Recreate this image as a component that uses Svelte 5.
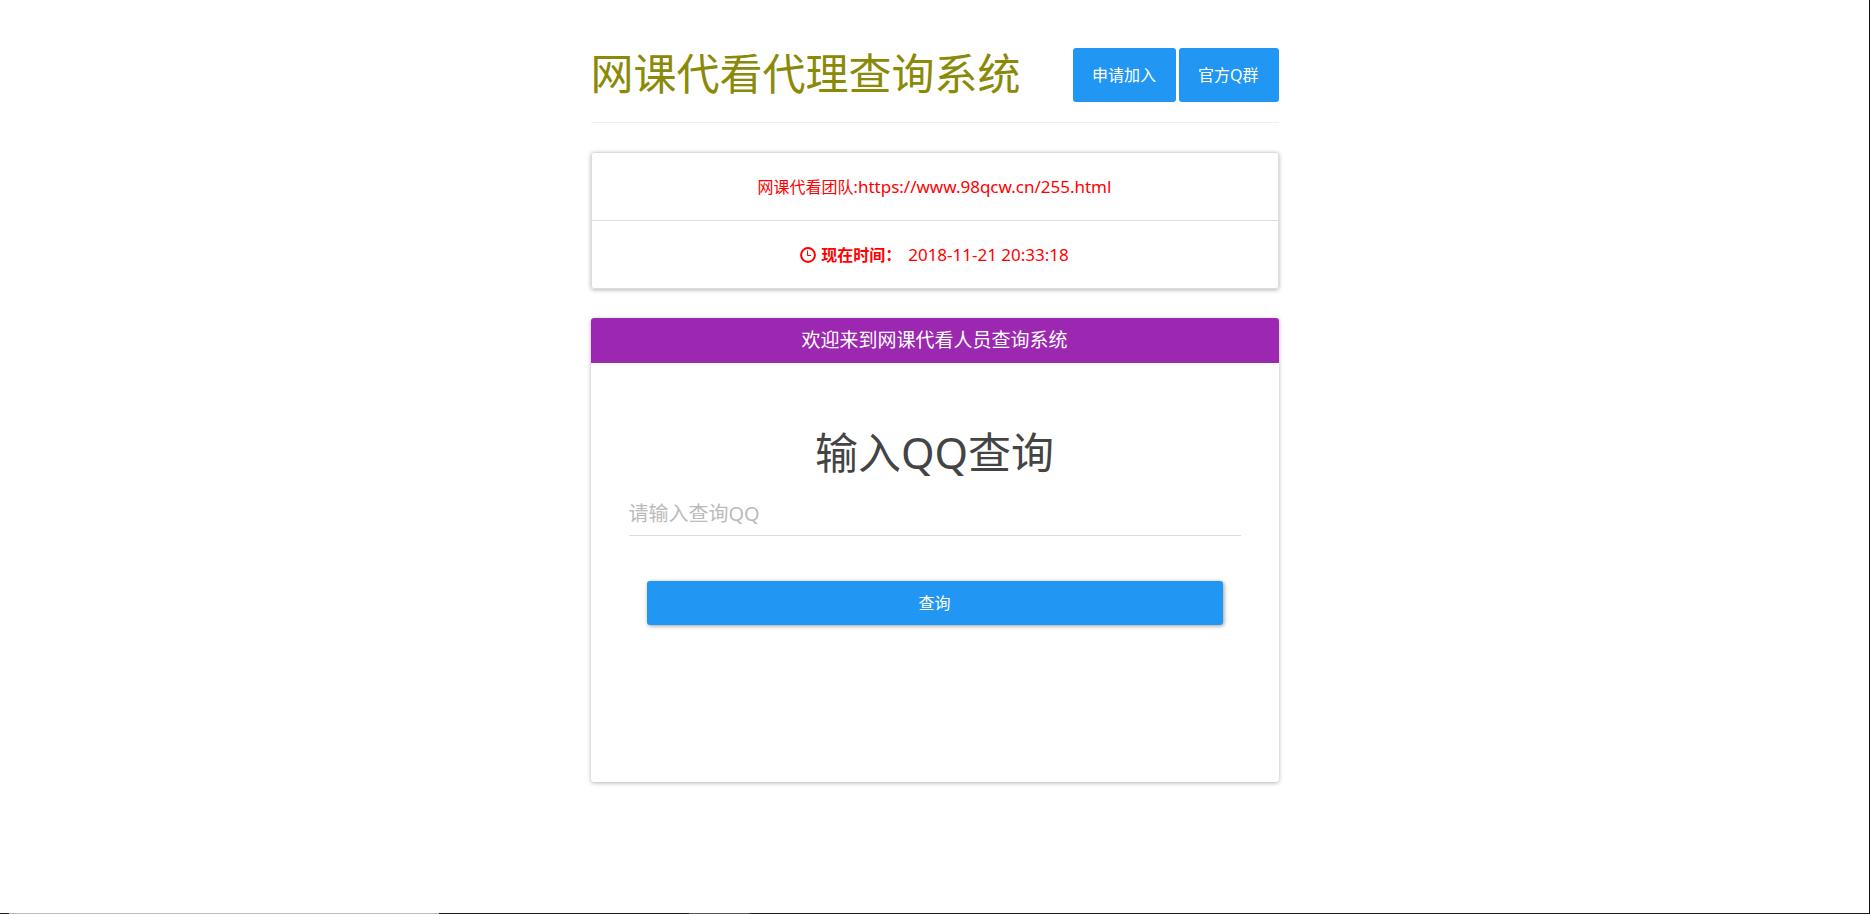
<script>
  let qq = $state('');

  const title = '网课代看代理查询系统';
  const links = [
    { label: '申请加入', href: '#join' },
    { label: '官方Q群', href: '#group' }
  ];
  const now = '2018-11-21 20:33:18';

  function search(event) {
    event.preventDefault();
  }
</script>

<div class="page">
  <main class="container">
    <header class="page-header">
      <h1>{title}</h1>
      <nav>
        {#each links as link}
          <a class="btn" href={link.href}>{link.label}</a>
        {/each}
      </nav>
    </header>

    <ul class="list-group">
      <li><a href="https://www.98qcw.cn/255.html">网课代看团队:<span class="latin">https://www.98qcw.cn/255.html</span></a></li>
      <li>
        <svg class="icon-time" viewBox="0 0 16 16" aria-hidden="true">
          <circle cx="8" cy="8" r="6.9" />
          <path d="M7.5 3.5v5h3.5" />
        </svg>
        <b>现在时间：</b>
        <time class="latin">{now}</time>
      </li>
    </ul>

    <section class="panel">
      <div class="panel-heading">欢迎来到网课代看人员查询系统</div>
      <form class="panel-body" onsubmit={search}>
        <h2><label for="qq">输入QQ查询</label></h2>
        <input id="qq" type="text" placeholder="请输入查询QQ" bind:value={qq} />
        <button class="submit" type="submit">查询</button>
      </form>
    </section>
  </main>
  <div class="bottom-edge"></div>
</div>

<style>
  :global(body) {
    background: #fff;
  }

  .page {
    box-sizing: border-box;
    display: flex;
    flex-direction: column;
    min-height: 100vh;
    border-right: 1px solid #111;
    font-family: "Noto Sans", "Noto Sans CJK SC", sans-serif;
    font-size: 16px;
    line-height: 24px;
    color: #444;
  }

  .container {
    box-sizing: border-box;
    flex: 1;
    width: 100%;
    max-width: 688px;
    margin: 0 auto;
    padding-top: 48px;
  }

  .page-header {
    display: flex;
    align-items: center;
    justify-content: space-between;
    padding-bottom: 20px;
    margin-bottom: 29px;
    border-bottom: 1px solid #eee;
  }

  h1,
  h2 {
    margin: 0;
    font-size: 43px;
    line-height: 46px;
    font-weight: 400;
  }

  h1 {
    padding-bottom: 2px;
    color: #8a8a08;
  }

  nav {
    display: flex;
    gap: 3px;
  }

  .btn {
    padding: 15px 20px 15px 19px;
    border-radius: 3px;
    background: #2196f3;
    color: #fff;
    text-decoration: none;
    white-space: nowrap;
  }

  .list-group {
    margin: 0 0 29px;
    padding: 0;
    list-style: none;
    border: 1px solid #ddd;
    border-radius: 3px;
    box-shadow: 0 1px 4px rgba(0, 0, 0, 0.3);
    color: #f00;
  }

  .list-group li {
    display: flex;
    align-items: center;
    justify-content: center;
    padding: 22px 16px 21px;
  }

  .list-group li + li {
    border-top: 1px solid #ddd;
  }

  .list-group a {
    color: inherit;
    text-decoration: none;
  }

  .latin {
    font-size: 17px;
  }

  .icon-time {
    width: 16px;
    height: 16px;
    margin-right: 5px;
    fill: none;
    stroke: currentColor;
    stroke-width: 2;
  }

  .icon-time path {
    stroke-width: 1;
  }

  b {
    margin-right: 7px;
    font-weight: 700;
  }

  .panel {
    border-radius: 3px;
    box-shadow: 0 1px 4px rgba(0, 0, 0, 0.3);
  }

  .panel-heading {
    padding: 10px 16px 11px;
    border-radius: 3px 3px 0 0;
    background: #9c27b0;
    color: #fff;
    font-size: 19px;
    text-align: center;
  }

  .panel-body {
    display: flex;
    flex-direction: column;
    padding: 67px 38px 157px;
  }

  h2 {
    text-align: center;
  }

  input {
    height: 44px;
    margin: 15px 0 45px;
    padding: 0;
    border: 0;
    border-bottom: 1px solid #ddd;
    outline: 0;
    background: transparent;
    font: inherit;
    font-size: 20px;
  }

  input::placeholder {
    color: #bbb;
    opacity: 1;
  }

  .submit {
    margin: 0 18px;
    padding: 10px 16px;
    border: 0;
    border-radius: 3px;
    background: #2196f3;
    box-shadow: 1px 1px 4px rgba(0, 0, 0, 0.4);
    color: #fff;
    font: inherit;
    cursor: pointer;
  }

  .bottom-edge {
    height: 1px;
    background: linear-gradient(90deg, #222 9px, #bbb 9px, #bbb 439px, #1a1a1a 439px, #1a1a1a 689px, #555 689px, #555 750px, #1a1a1a 750px);
  }
</style>
